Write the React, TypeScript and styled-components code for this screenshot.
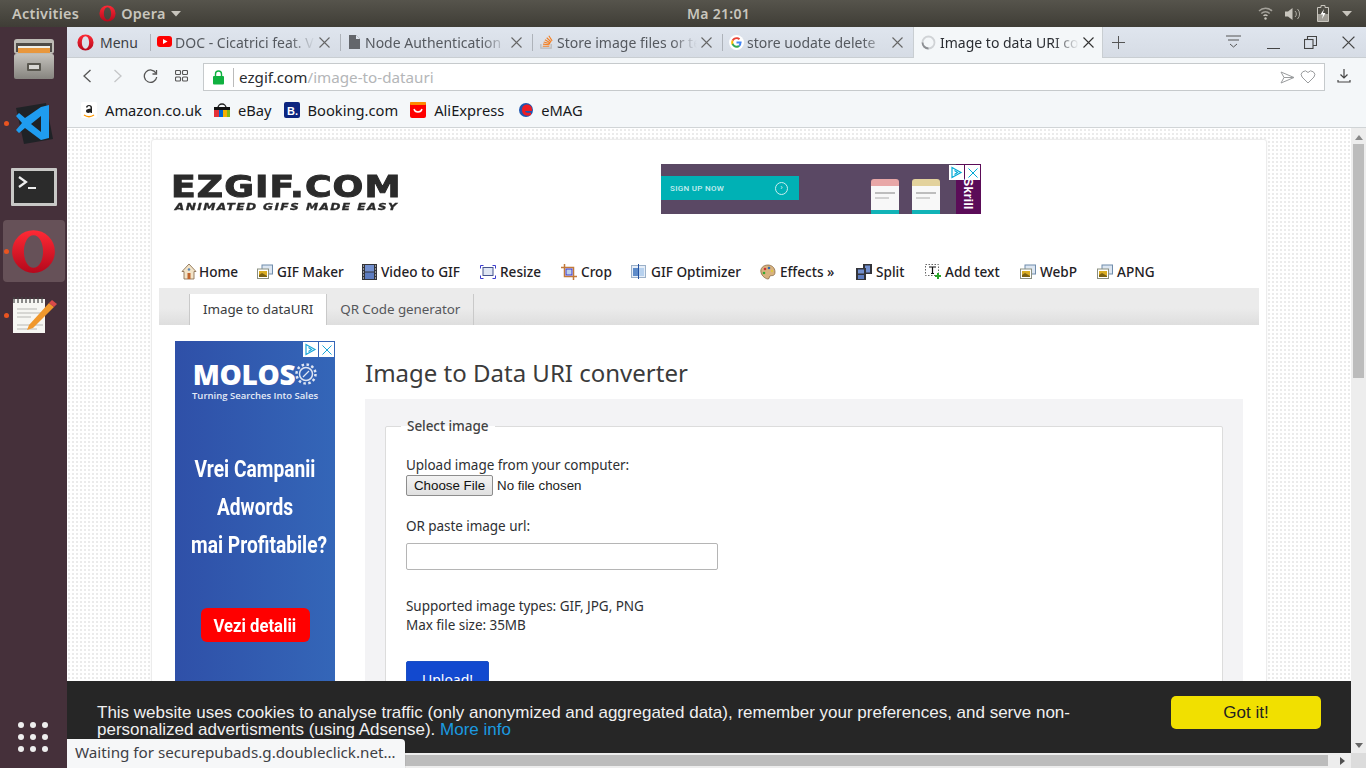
import React from "react";
import styled, { createGlobalStyle } from "styled-components";

const UI = `"Noto Sans", "Open Sans", sans-serif`;
const Global = createGlobalStyle`
  html, body { margin: 0; padding: 0; height: 768px; overflow: hidden; background: #fff; }
  #root { height: 768px; }
  * { box-sizing: border-box; }
`;

const Screen = styled.div`width:1366px;height:768px;display:flex;flex-direction:column;overflow:hidden;font-family:${UI};`;
const TopBar = styled.header`height:27px;flex:none;display:grid;grid-template-columns:675px auto 1fr;align-items:center;padding:0 12px;color:#c8c5bd;font-size:14px;font-weight:600;letter-spacing:.3px;background:linear-gradient(#56544c,#3f3d36);`;
const TopLeft = styled.div`display:flex;align-items:center;font-size:14.4px;`;
const AppMenu = styled.div`display:flex;align-items:center;gap:5px;margin-left:20px;`;
const TopRight = styled.div`display:flex;align-items:center;justify-content:flex-end;gap:12px;padding-right:2px;`;
const Body = styled.div`flex:1;display:flex;min-height:0;`;
const Dock = styled.nav`width:67px;flex:none;background:#45303a;display:flex;flex-direction:column;align-items:center;padding-top:1px;position:relative;`;
const DockItem = styled.div<{ $active?: boolean; $dot?: boolean }>`
  width:62px;height:62px;margin-bottom:2px;display:flex;align-items:center;justify-content:center;border-radius:4px;position:relative;
  background:${p => (p.$active ? "#665158" : "transparent")};
  ${p => p.$dot ? `&::before{content:"";position:absolute;left:1px;top:29px;width:5px;height:5px;border-radius:50%;background:#e95420;}` : ""}
`;
const DockGrid = styled.div`position:absolute;left:18px;bottom:16px;display:grid;grid-template-columns:repeat(3,6px);gap:6px;`;
const Dot = styled.span`width:6px;height:6px;border-radius:50%;background:#eee;`;
const Browser = styled.main`flex:1;min-width:0;display:flex;flex-direction:column;`;
const TabStrip = styled.div`height:31px;flex:none;display:flex;background:linear-gradient(#dfe5ee,#d6dce5);border-bottom:1px solid #c9ced2;position:relative;`;
const MenuBtn = styled.div`width:83px;flex:none;display:flex;align-items:center;gap:6px;padding-left:10px;font-size:14px;color:#3c3f44;`;
const Tab = styled.div<{ $active?: boolean; $w: number }>`
  width:${p => p.$w}px;flex:none;height:${p => (p.$active ? 31 : 30)}px;display:flex;align-items:center;gap:3px;padding:0 ${p => (p.$active ? 8 : 10)}px 0 7px;font-size:14px;position:relative;
  color:${p => (p.$active ? "#2b2e33" : "#55595f")};
  background:${p => (p.$active ? "#f4f7f9" : "transparent")};
  ${p => !p.$active ? `&::before{content:"";position:absolute;left:0;top:7px;height:17px;width:1px;background:#aeb3ba;}` : `border-left:1px solid #c9ced2;border-right:1px solid #c9ced2;`}
`;
const TabTitle = styled.span`flex:1;min-width:0;margin-right:1px;white-space:nowrap;overflow:hidden;-webkit-mask-image:linear-gradient(90deg,#000 82%,transparent 100%);mask-image:linear-gradient(90deg,#000 82%,transparent 100%);`;
const WinControls = styled.div`flex:none;display:flex;align-items:center;justify-content:flex-end;padding-left:12px;color:#4a4d52;`;
const Spacer = styled.div`flex:1;`;
const WinBtn = styled.div<{ $w: number }>`width:${p => p.$w}px;display:flex;justify-content:center;align-items:center;`;
const AddressRow = styled.div`height:36px;flex:none;background:#f4f7f9;display:flex;align-items:center;padding-left:9px;color:#55595f;`;
const NavBtn = styled.div<{ $w: number }>`width:${p => p.$w}px;flex:none;display:flex;align-items:center;justify-content:center;`;
const UrlBox = styled.div`width:1122px;height:28px;margin:2px 0 0 3px;flex:none;background:#fff;border:1px solid #c6cacc;display:flex;align-items:center;padding:0 8px 0 9px;font-size:15.2px;`;
const UrlDivider = styled.span`width:1px;height:19px;background:#bbb;margin:0 5px 0 9px;`;
const UrlHost = styled.span`color:#2a2c30;`;
const UrlPath = styled.span`color:#b4b6b8;`;
const Bookmarks = styled.div`height:34px;flex:none;background:#f4f7f9;border-bottom:1px solid #d0d4d6;display:flex;align-items:center;padding:0 0 2px 14px;gap:12px;font-size:14.7px;color:#17191c;`;
const Bookmark = styled.div<{ $ml?: number }>`display:flex;align-items:center;gap:8px;margin-left:${p => p.$ml ?? 0}px;`;
const Viewport = styled.div`flex:1;min-height:0;position:relative;display:grid;grid-template-columns:1fr 15px;grid-template-rows:1fr 15px;overflow:hidden;`;
const Page = styled.div`
  min-width:0;min-height:0;overflow:hidden;padding:11px 84px 0;
  background-color:#fff;
  background-image:radial-gradient(#ebebeb .9px,transparent 1px);
  background-size:4px 4px;
`;
const Card = styled.div`background:#fff;border:1px solid #ececec;border-radius:3px;box-shadow:0 0 3px rgba(0,0,0,.05);width:1116px;height:700px;padding:0 7px;`;
const Header = styled.div`height:111px;display:flex;`;
const Logo = styled.div`width:502px;flex:none;padding:33px 0 0 12px;color:#2b2b2b;font-family:"DejaVu Sans",sans-serif;font-weight:700;`;
const LogoMain = styled.div`font-size:31px;line-height:27px;letter-spacing:.9px;-webkit-text-stroke:1px #2b2b2b;white-space:nowrap;transform:scaleX(1.17);transform-origin:left center;`;
const LogoSub = styled.div`font-size:9.5px;line-height:11px;margin-top:1px;font-style:italic;letter-spacing:1.05px;white-space:nowrap;-webkit-text-stroke:.3px #2b2b2b;padding-left:3px;transform:scaleX(1.29);transform-origin:left center;`;
const LeaderAd = styled.div`margin-top:24px;width:320px;height:50px;background:#5a4864;position:relative;display:flex;align-items:center;overflow:hidden;`;
const SignUp = styled.div`width:138px;height:24px;background:#00b1b5;color:#c8eef0;font:500 8px Roboto,sans-serif;letter-spacing:.3px;padding:0 11px 0 9px;display:flex;align-items:center;justify-content:space-between;margin-top:-2px;`;
const Ring = styled.span`width:13px;height:13px;border:1px solid #c8eef0;border-radius:50%;display:flex;align-items:center;justify-content:center;font-size:8px;line-height:1;`;
const Phone = styled.div<{ $c: string; $x: number }>`
  position:absolute;left:${p => p.$x}px;bottom:0;width:28px;height:35px;border-radius:3px 3px 0 0;
  background:
    linear-gradient(#bdbdbd,#bdbdbd) 4px 13px/20px 2px no-repeat,
    linear-gradient(#d2d2d2,#d2d2d2) 4px 18px/14px 2px no-repeat,
    linear-gradient(${p => p.$c} 0 7px,#f8f8f8 7px 31px,#11b3b7 31px);
`;
const Skrill = styled.div`position:absolute;right:0;top:0;width:25px;height:50px;background:#5b0c58;color:#fff;display:flex;align-items:center;justify-content:center;`;
const SkrillText = styled.span`font:700 13px "Liberation Sans",sans-serif;transform:rotate(90deg);display:block;margin-top:9px;`;
const AdBadges = styled.div`position:absolute;top:1px;right:1px;display:flex;gap:1px;`;
const AdBadge = styled.span`width:15px;height:15px;background:#fff;display:flex;align-items:center;justify-content:center;`;
const Nav = styled.div`height:37px;display:flex;align-items:center;padding:4px 0 0 22px;font-size:13.6px;font-weight:500;color:#1f2125;`;
const NavLink = styled.div<{ $w: number }>`display:flex;align-items:center;gap:4px;width:${p => p.$w}px;flex:none;white-space:nowrap;`;
const SubNav = styled.div`height:37px;background:linear-gradient(#ebebeb,#ebebeb 55%,#dedede);display:flex;align-items:flex-end;padding-left:30px;`;
const SubTab = styled.div<{ $active?: boolean }>`height:31px;padding:0 13px 2px;display:flex;align-items:center;font-size:13.4px;letter-spacing:-.05px;color:${p => (p.$active ? "#3a3c40" : "#55575b")};background:${p => (p.$active ? "#fff" : "transparent")};border-right:1px solid #c9c9c9;${p => p.$active ? "border-left:1px solid #c9c9c9;" : ""}`;
const Columns = styled.div`display:flex;padding:16px 16px 0;gap:30px;`;
const SideAd = styled.div`width:160px;height:345px;flex:none;position:relative;background:linear-gradient(90deg,#2f50a8,#3466b8);color:#fff;font-family:Roboto,sans-serif;text-align:center;`;
const AdLogo = styled.div`font:800 28px/30px "Open Sans",sans-serif;padding-top:18px;letter-spacing:-.3px;display:flex;justify-content:center;align-items:center;`;
const AdTag = styled.div`font:600 9.5px/11px "Open Sans",sans-serif;margin-top:1px;color:#e4ebf7;white-space:nowrap;`;
const AdLine = styled.div<{ $mt?: number }>`font:700 24px/26px Roboto,sans-serif;transform:scaleX(.8);white-space:nowrap;margin-top:${p => p.$mt ?? 12}px;`;
const RedBtn = styled.div`width:109px;height:34px;margin:50px auto 0;background:#f00;border-radius:6px;font:700 18.5px/36px Roboto,sans-serif;`;
const RedText = styled.span`display:inline-block;transform:scaleX(.9);`;
const Main = styled.div`flex:1;min-width:0;`;
const Title = styled.h1`margin:17px 0 11px;font-size:24px;line-height:30px;font-weight:400;color:#3b3b3b;`;
const Panel = styled.div`background:#f3f3f5;padding:27px 20px 0;height:340px;`;
const Fieldset = styled.div`background:#fff;border:1px solid #dcdcdc;border-radius:2px;height:320px;padding:29px 20px 0;position:relative;font-size:13.5px;letter-spacing:-.05px;color:#2e3033;`;
const Legend = styled.div`position:absolute;left:15px;top:-10px;padding:0 6px;background:linear-gradient(#f3f3f5 50%,#fff 50%);line-height:18px;font-weight:500;color:#444;`;
const Label = styled.div<{ $mt?: number }>`line-height:19px;margin-top:${p => p.$mt ?? 0}px;`;
const FileRow = styled.div`display:flex;align-items:center;gap:4px;font:13.33px "Liberation Sans",Arial,sans-serif;letter-spacing:0;color:#222;`;
const FileBtn = styled.button`width:87px;height:21px;padding:0;background:linear-gradient(#f3f3f3,#e0e0e0);border:1px solid #8d8d8d;border-radius:2px;font:13.33px "Liberation Sans",Arial,sans-serif;color:#111;`;
const UrlInput = styled.input`display:block;width:312px;height:27px;border:1px solid #b5b5b5;border-radius:2px;background:#fff;margin-top:7px;`;
const Upload = styled.button`width:83px;height:36px;background:#1249cf;border:1px solid #1a4fc4;border-radius:2px;color:#fff;font:14px ${UI};margin-top:26px;padding:0;display:block;`;
const VBar = styled.div`background:#ededed;position:relative;display:flex;flex-direction:column;align-items:center;justify-content:space-between;padding:7px 0 5px;`;
const VThumb = styled.div`position:absolute;top:16px;left:2px;width:11px;height:234px;background:#bcbcbc;`;
const HBar = styled.div`background:#ededed;position:relative;display:flex;align-items:center;justify-content:flex-end;padding-right:6px;`;
const HThumb = styled.div`position:absolute;top:2px;left:0;width:1261px;height:11px;background:#bcbcbc;`;
const Corner = styled.div`background:#dcdcdc;`;
const Up = styled.i<{ $flip?: boolean }>`display:block;width:0;height:0;border-left:4px solid transparent;border-right:4px solid transparent;${p => p.$flip ? "border-top:5px solid #666;" : "border-bottom:5px solid #888;"}`;
const Right = styled.i`display:block;width:0;height:0;border-top:4px solid transparent;border-bottom:4px solid transparent;border-left:5px solid #505050;`;
const Cookie = styled.div`position:absolute;left:0;right:15px;bottom:15px;height:72px;background:#262626;color:#f0f0f0;display:flex;justify-content:space-between;padding:15px 30px 0;font:17px/17px Helvetica,"Liberation Sans",Arial,sans-serif;`;
const CookieText = styled.div`width:1004px;padding-top:8px;`;
const MoreInfo = styled.span`color:#1b9ae0;`;
const GotIt = styled.div`width:150px;height:33px;background:#f1e000;border-radius:5px;color:#222;text-align:center;line-height:33px;`;
const Status = styled.div`position:absolute;left:0;bottom:0;width:338px;height:29px;background:#f6f7f8;border-radius:0 4px 0 0;box-shadow:0 0 1px rgba(0,0,0,.4);font-size:15.2px;line-height:26px;padding-left:8px;color:#3e4045;white-space:nowrap;`;

const X = ({ s = 11, c = "#666" }: { s?: number; c?: string }) => (
  <svg width={s} height={s} viewBox="0 0 11 11" fill="none" stroke={c} strokeWidth="1.1" style={{ flex: "none" }}><path d="M.5.5l10 10M10.5.5l-10 10" /></svg>
);
const OperaO = ({ s = 17 }: { s?: number }) => (
  <svg width={s} height={s} viewBox="0 0 40 40" style={{ flex: "none" }}><defs><linearGradient id="op" x1="0" y1="0" x2="0" y2="1"><stop offset="0" stopColor="#ff2a35" /><stop offset="1" stopColor="#b5081c" /></linearGradient></defs><path fillRule="evenodd" fill="url(#op)" d="M20 1a19 19 0 1 0 0 38 19 19 0 0 0 0-38zm0 4.500c5 0 8.500 6.500 8.500 14.500s-3.500 14.500-8.500 14.500-8.500-6.500-8.500-14.500 3.500-14.500 8.500-14.500z" /></svg>
);
const Yt = () => (<svg width="15" height="16" viewBox="0 0 15 16" style={{ flex: "none" }}><rect x="0" y="2" width="15" height="11" rx="3" fill="#f00" /><path d="M6 5l4.500 2.500L6 10z" fill="#fff" /></svg>);
const Doc = () => (<svg width="15" height="16" viewBox="0 0 15 16" style={{ flex: "none" }}><path d="M2 1h7l4 4v10H2z" fill="#63666b" /><path d="M9 1v4h4" fill="#dfe5ee" /></svg>);
const So = () => (<svg width="15" height="16" viewBox="0 0 16 16" fill="none" style={{ flex: "none" }}><path d="M2 10v4.500h11V10" stroke="#b9b9b9" strokeWidth="1.300" /><path d="M4 12.500h7M4.300 10.300l6.900.6M5 8l6.700 1.800M6.300 5.700l6 3.300M8.200 3.500l4.800 4.500M10.500 1.300l3.500 5.500" stroke="#f48024" strokeWidth="1.200" /></svg>);
const G = () => (<svg width="15" height="15" viewBox="0 0 48 48" style={{ flex: "none" }}><circle cx="24" cy="24" r="24" fill="#fff" /><path fill="#ea4335" d="M24 13c3 0 5.400 1 7.300 2.800l4.400-4.400C32.700 8.600 28.800 7 24 7c-6.600 0-12.300 3.800-15.100 9.300l5.100 4C15.300 16.100 19.300 13 24 13z" /><path fill="#4285f4" d="M40.500 24.500c0-1.200-.1-2.300-.3-3.500H24v6.500h9.300c-.4 2.100-1.600 3.900-3.400 5.100l5 3.900c3-2.700 4.600-6.800 4.600-12z" /><path fill="#fbbc05" d="M14 27.700c-.4-1.200-.6-2.400-.6-3.700s.2-2.500.6-3.700l-5.100-4C7.700 18.600 7 21.200 7 24s.7 5.400 1.900 7.700z" /><path fill="#34a853" d="M24 41c4.600 0 8.400-1.500 11-4l-5-3.900c-1.400.9-3.300 1.500-6 1.500-4.700 0-8.700-3.100-10-7.900l-5.100 4C11.700 37.200 17.400 41 24 41z" /></svg>);
const Spinner = () => (<svg width="15" height="15" viewBox="0 0 15 15" fill="none" style={{ flex: "none", marginRight: 1 }}><circle cx="7.500" cy="7.500" r="6" stroke="#d0d3d6" strokeWidth="1.800" /><path d="M7.500 13.500a6 6 0 0 1-6-6" stroke="#8c8f93" strokeWidth="1.800" /></svg>);

const tabs = [
  { w: 190, t: "DOC - Cicatrici feat. Vlad", i: <Yt /> },
  { w: 192, t: "Node Authentication", i: <Doc /> },
  { w: 190, t: "Store image files or text", i: <So /> },
  { w: 191, t: "store uodate delete", i: <G /> },
];

const NavHouse = () => (<svg width="16" height="17" viewBox="0 0 16 17" style={{ marginRight: -2 }}><path d="M8 1L1 8.500h2V16h10V8.500h2z" fill="#f2e3c7" stroke="#8d7355" strokeWidth=".9" /><rect x="6.500" y="10" width="3" height="6" fill="#c0642c" /><circle cx="8" cy="6.500" r="1.300" fill="#5a86b8" /></svg>);
const NavPics = () => (<svg width="16" height="16" viewBox="0 0 16 16"><rect x="5" y="1" width="10.500" height="9" fill="#dce6f2" stroke="#6f8cab" /><rect x=".5" y="5" width="11" height="9.500" fill="#fff" stroke="#8a8f80" /><rect x="2" y="7" width="8" height="6" fill="#d8ab22" /><path d="M2 11l3-2 5 3v1H2z" fill="#7b6112" /></svg>);
const NavFilm = () => (<svg width="15" height="16" viewBox="0 0 15 16"><rect width="15" height="16" fill="#33343a" /><rect x="3" y="1" width="9" height="6.500" fill="#7390cf" /><rect x="3" y="8.500" width="9" height="6.500" fill="#5d7cc0" /><path d="M1 2h1M1 5h1M1 8h1M1 11h1M1 14h1M13 2h1M13 5h1M13 8h1M13 11h1M13 14h1" stroke="#fff" /></svg>);
const NavResize = () => (<svg width="16" height="14" viewBox="0 0 16 14" fill="none"><rect x="3" y="2.500" width="10" height="8" fill="#dfe6f3" stroke="#46548e" /><path d="M.5 3.500v-3h3M12.500.5h3v3M15.500 10.500v3h-3M3.500 13.500h-3v-3" stroke="#3c3ccf" /></svg>);
const NavCrop = () => (<svg width="16" height="16" viewBox="0 0 16 16" fill="none"><path d="M3.500 0v12.500H16" stroke="#c27a3a" strokeWidth="1.500" /><path d="M0 3.500h12.500V16" stroke="#c27a3a" strokeWidth="1.500" /><rect x="5" y="5" width="6" height="6" fill="#bcd0ea" stroke="#3a3ad0" /></svg>);
const NavOpt = () => (<svg width="15" height="15" viewBox="0 0 15 15" style={{ marginRight: 1 }}><rect x=".5" y="1.500" width="14" height="12" fill="#e6eef8" stroke="#9bb0c8" /><rect x="2" y="4" width="5" height="8" fill="#5d8bc9" /><rect x="8" y="4" width="5" height="8" fill="#b7d1ee" /><path d="M7.500 0v15" stroke="#2350a0" /></svg>);
const NavPalette = () => (<svg width="16" height="16" viewBox="0 0 16 16"><path d="M8 1C3 1 0 4.500 1 8.500S6 15 8 15c1.500 0 1-2 2-3s5 1 5-4-4-7-7-7z" fill="#d8b27e" stroke="#7c5c34" strokeWidth=".7" /><circle cx="5" cy="5" r="1.300" fill="#c33" /><circle cx="9" cy="4" r="1.300" fill="#36a" /><circle cx="4" cy="9" r="1.300" fill="#3a3" /><circle cx="12" cy="7" r="1.100" fill="#dc3" /></svg>);
const NavSplit = () => (<svg width="16" height="16" viewBox="0 0 16 16"><rect x="7" y="0" width="9" height="10" fill="#33343a" /><rect x="9" y="1.500" width="5" height="7" fill="#7390cf" /><rect x="0" y="4" width="10" height="12" fill="#33343a" /><rect x="2" y="5.500" width="6" height="4" fill="#7390cf" /><rect x="2" y="11" width="6" height="4" fill="#5d7cc0" /></svg>);
const NavTextIcon = () => (<svg width="16" height="17" viewBox="0 0 16 17" fill="none"><rect x=".5" y="1.500" width="13" height="11" stroke="#666" strokeDasharray="1.500 1.500" /><path d="M4 4h7M7.500 4v6.500M6 10.500h3" stroke="#111" strokeWidth="1.200" /><path d="M13 10v6M10 13h6" stroke="#2aa52a" strokeWidth="2" /></svg>);

const navItems: [React.ReactNode, string, number][] = [
  [<NavHouse />, "Home", 76], [<NavPics />, "GIF Maker", 105], [<NavFilm />, "Video to GIF", 118], [<NavResize />, "Resize", 81],
  [<NavCrop />, "Crop", 70], [<NavOpt />, "GIF Optimizer", 129], [<NavPalette />, "Effects »", 96], [<NavSplit />, "Split", 69],
  [<NavTextIcon />, "Add text", 95], [<NavPics />, "WebP", 77], [<NavPics />, "APNG", 58],
];

const AdChoice = ({ c = "#00a9d6" }: { c?: string }) => (
  <AdBadges>
    <AdBadge><svg width="13" height="13" viewBox="0 0 13 13" fill="none" stroke={c} strokeWidth="1.200"><path d="M2 1.500l9 5-9 5z" /><path d="M4.500 4.500l3 2-3 2" /></svg></AdBadge>
    <AdBadge><X s={10} c={c} /></AdBadge>
  </AdBadges>
);

export default function App() {
  return (
    <Screen>
      <Global />
      <TopBar>
        <TopLeft>
          Activities
          <AppMenu>
            <OperaO />
            Opera
            <svg width="10" height="6" viewBox="0 0 10 6"><path d="M0 0h10L5 5.500z" fill="#c8c5bd" /></svg>
          </AppMenu>
        </TopLeft>
        <div>Ma 21:01</div>
        <TopRight>
          <svg width="15" height="13" viewBox="0 0 15 13" fill="none" stroke="#c8c5bd" strokeWidth="1.400"><path d="M1 4a9 9 0 0 1 13 0M3.300 6.500a6 6 0 0 1 8.400 0" opacity=".7" /><path d="M5.500 8.800a3 3 0 0 1 4 0" /><circle cx="7.500" cy="11.500" r="1.200" fill="#c8c5bd" stroke="none" /></svg>
          <svg width="16" height="14" viewBox="0 0 16 14" fill="#c8c5bd"><path d="M0 4.500h3L7.500 1v12L3 9.500H0z" /><path d="M10 4a4 4 0 0 1 0 6M12.500 2a7 7 0 0 1 0 10" stroke="#c8c5bd" fill="none" opacity=".8" /></svg>
          <svg width="12" height="17" viewBox="0 0 12 17" fill="none" style={{ margin: "0 1px 0 4px" }}><path d="M4 .5h4v2h3.500v14H.5v-14H4z" stroke="#c8c5bd" /><path d="M1 9h10v7H1z" fill="#c8c5bd" opacity=".7" /><path d="M7 4L3.500 9.500H6L5 14l3.500-6H6z" fill="#fff" /></svg>
          <svg width="10" height="6" viewBox="0 0 10 6"><path d="M0 0h10L5 5.500z" fill="#c8c5bd" /></svg>
        </TopRight>
      </TopBar>
      <Body>
        <Dock>
          <DockItem>
            <svg width="44" height="44" viewBox="0 0 44 44"><defs><linearGradient id="cab" x1="0" y1="0" x2="0" y2="1"><stop offset="0" stopColor="#c4c2bc" /><stop offset="1" stopColor="#86847f" /></linearGradient></defs><rect x="2" y="2" width="40" height="15" rx="3" fill="#bdbbb5" /><rect x="4" y="6" width="36" height="9" fill="#4f4c48" /><rect x="6" y="9" width="32" height="2" fill="#f0f0ea" /><rect x="6" y="11" width="32" height="5" fill="#e8973c" /><rect x="2" y="17" width="40" height="25" rx="2" fill="url(#cab)" /><rect x="15" y="26" width="14" height="8" rx="1" fill="#59574f" /><rect x="17" y="28" width="10" height="4" fill="#d9d8d4" /></svg>
          </DockItem>
          <DockItem $dot>
            <svg width="44" height="44" viewBox="0 0 44 44"><path d="M4 7l30-5 7 36-29 5z" fill="#1f2226" /><path fillRule="evenodd" fill="#1f9cf0" d="M29 6l8-2v33l-8 2-16-12-6 5-3-3 6-7-6-7 3-3 6 5zm0 9l-10 8 10 8z" /></svg>
          </DockItem>
          <DockItem>
            <svg width="46" height="38" viewBox="0 0 46 38"><rect width="46" height="38" rx="1" fill="#c8c8c6" /><rect x="3" y="3" width="40" height="32" fill="#2b2b2b" /><path d="M8 9l7 5-7 5" stroke="#eee" strokeWidth="2.200" fill="none" /><path d="M17 20h8" stroke="#eee" strokeWidth="2" /></svg>
          </DockItem>
          <DockItem $active $dot>
            <OperaO s={45} />
          </DockItem>
          <DockItem $dot>
            <svg width="46" height="40" viewBox="0 0 46 40"><rect x="2" y="4" width="32" height="34" fill="#f6f6f2" /><path d="M3 2v6M7 2v6M11 2v6M15 2v6M19 2v6M23 2v6M27 2v6M31 2v6" stroke="#444" strokeWidth="1.200" /><path d="M6 14h20M6 18h24M6 22h14M6 30h26M6 34h20" stroke="#b8b8b4" strokeWidth="1.200" /><path d="M18 30L38 8l5 4-21 21-6 2z" fill="#f0982c" /><path d="M38 8l3-3 5 4-3 3z" fill="#d94a4a" /></svg>
          </DockItem>
          <DockGrid>{Array.from({ length: 9 }, (_, i) => <Dot key={i} />)}</DockGrid>
        </Dock>
        <Browser>
          <TabStrip>
            <MenuBtn><OperaO />Menu</MenuBtn>
            {tabs.map(t => (
              <Tab key={t.t} $w={t.w}>{t.i}<TabTitle>{t.t}</TabTitle><X /></Tab>
            ))}
            <Tab $active $w={190}><Spinner /><TabTitle>Image to data URI converter</TabTitle><X s={11} c="#333" /></Tab>
            <WinBtn $w={30}><svg width="13" height="13" viewBox="0 0 13 13" stroke="#555" fill="none"><path d="M6.500 0v13M0 6.500h13" /></svg></WinBtn>
            <Spacer />
            <WinControls>
              <WinBtn $w={46}><svg width="15" height="14" viewBox="0 0 15 14" fill="none" stroke="#555"><path d="M0 1h15M2 5h11" /><path d="M4 9l3.500 3L11 9" /></svg></WinBtn>
              <WinBtn $w={34}><svg width="13" height="13" viewBox="0 0 13 13" fill="none" stroke="#444"><path d="M0 12.500h13" /></svg></WinBtn>
              <WinBtn $w={40}><svg width="13" height="13" viewBox="0 0 13 13" fill="none" stroke="#444" strokeWidth="1.100"><rect x=".5" y="3.500" width="8.500" height="9" /><path d="M3.500 3.500v-3h9v9H9" /></svg></WinBtn>
              <WinBtn $w={36}><X s={13} c="#444" /></WinBtn>
            </WinControls>
          </TabStrip>
          <AddressRow>
            <NavBtn $w={22}><svg width="10" height="14" viewBox="0 0 10 14" fill="none" stroke="#555" strokeWidth="1.300"><path d="M8.500 1L2 7l6.500 6" /></svg></NavBtn>
            <NavBtn $w={40}><svg width="10" height="14" viewBox="0 0 10 14" fill="none" stroke="#c4c6c8" strokeWidth="1.300"><path d="M1.500 1L8 7l-6.500 6" /></svg></NavBtn>
            <NavBtn $w={24}><svg width="15" height="15" viewBox="0 0 15 15" fill="none" stroke="#555" strokeWidth="1.300"><path d="M13 4.200A6.200 6.200 0 1 0 13.700 8" /><path d="M13.500 1v4h-4" /></svg></NavBtn>
            <NavBtn $w={38}><svg width="13" height="12" viewBox="0 0 13 12" fill="none" stroke="#555" strokeWidth="1.100"><rect x=".5" y=".5" width="5" height="4" rx="1" /><rect x="7.500" y=".5" width="5" height="4" rx="1" /><rect x=".5" y="7" width="5" height="4" rx="1" /><rect x="7.500" y="7" width="5" height="4" rx="1" /></svg></NavBtn>
            <UrlBox>
              <svg width="11" height="15" viewBox="0 0 11 15" style={{ flex: "none" }}><path d="M2.500 6V4a3 3 0 0 1 6 0v2" fill="none" stroke="#10b140" strokeWidth="1.400" /><rect y="6" width="11" height="8.500" rx="1" fill="#10b140" /></svg>
              <UrlDivider />
              <UrlHost>ezgif.com</UrlHost><UrlPath>/image-to-datauri</UrlPath>
              <Spacer />
              <svg width="15" height="13" viewBox="0 0 15 13" fill="none" stroke="#9a9c9e"><path d="M1 1l13 5.500L1 12l3-5.500z" /><path d="M4 6.500h10" /></svg>
              <svg width="16" height="14" viewBox="0 0 16 14" fill="none" stroke="#9a9c9e" style={{ marginLeft: 5 }}><path d="M8 13L2 7a3.600 3.600 0 0 1 6-4.500A3.600 3.600 0 0 1 14 7z" /></svg>
            </UrlBox>
            <NavBtn $w={38}><svg width="14" height="14" viewBox="0 0 14 14" fill="none" stroke="#444" strokeWidth="1.200"><path d="M7 0v9M3.500 5.500L7 9l3.500-3.500M1 11v2h12v-2" /></svg></NavBtn>
          </AddressRow>
          <Bookmarks>
            <Bookmark>
              <svg width="16" height="16" viewBox="0 0 16 16"><rect width="16" height="16" rx="2" fill="#fff" /><path d="M3 13c3 2 7 2 10 0" stroke="#f90" strokeWidth="1.400" fill="none" /><path d="M5 5.500a3 2.500 0 0 1 6 0V11H9.500v-1c-1.800 1.600-4.500 1-4.500-1 0-2 2.800-2.300 4.500-2.300V5.500a1.500 1.500 0 0 0-3 0z" fill="#222" /></svg>
              Amazon.co.uk
            </Bookmark>
            <Bookmark>
              <svg width="16" height="16" viewBox="0 0 16 16"><path d="M4 6a4 4 0 0 1 8 0" stroke="#222" strokeWidth="1.400" fill="none" /><rect y="5" width="16" height="3" fill="#111" /><rect y="8" width="5" height="7" fill="#e53238" /><rect x="5" y="8" width="4" height="7" fill="#0064d2" /><rect x="9" y="8" width="4" height="7" fill="#f5af02" /><rect x="13" y="8" width="3" height="7" fill="#86b817" /></svg>
              eBay
            </Bookmark>
            <Bookmark>
              <svg width="16" height="16" viewBox="0 0 16 16"><rect width="16" height="16" rx="2" fill="#0c2580" /><text x="3" y="12.500" fontSize="11" fontWeight="700" fill="#fff" fontFamily="Liberation Sans">B.</text></svg>
              Booking.com
            </Bookmark>
            <Bookmark>
              <svg width="16" height="16" viewBox="0 0 16 16"><rect width="16" height="16" rx="2" fill="#f00" /><rect width="16" height="3" rx="1" fill="#ff8a00" /><path d="M4 7c1 4 7 4 8 0" stroke="#fff" strokeWidth="1.400" fill="none" /></svg>
              AliExpress
            </Bookmark>
            <Bookmark $ml={3}>
              <svg width="14" height="14" viewBox="0 0 14 14"><circle cx="7" cy="7" r="7" fill="#1f56b0" /><path d="M3 7a5 5 0 0 1 10-1v2H6c.5 2 3 2.500 6 1.500V12c-4 1.500-9 .5-9-5z" fill="#ed1c24" /></svg>
              eMAG
            </Bookmark>
          </Bookmarks>
          <Viewport>
            <Page>
              <Card>
                <Header>
                  <Logo>
                    <LogoMain>EZGIF.COM</LogoMain>
                    <LogoSub>ANIMATED GIFS MADE EASY</LogoSub>
                  </Logo>
                  <LeaderAd>
                    <SignUp>SIGN UP NOW<Ring>›</Ring></SignUp>
                    <Phone $c="#e8a7a7" $x={210} />
                    <Phone $c="#e3d29d" $x={251} />
                    <Skrill><SkrillText>Skrill</SkrillText></Skrill>
                    <AdChoice />
                  </LeaderAd>
                </Header>
                <Nav>
                  {navItems.map(([ic, label, w]) => (
                    <NavLink key={label} $w={w}>{ic}{label}</NavLink>
                  ))}
                </Nav>
                <SubNav>
                  <SubTab $active>Image to dataURI</SubTab>
                  <SubTab>QR Code generator</SubTab>
                </SubNav>
                <Columns>
                  <SideAd>
                    <AdChoice c="#1aa6d8" />
                    <AdLogo>
                      MOLOS
                      <svg width="22" height="22" viewBox="0 0 22 22" fill="none" stroke="#dfe6f3"><circle cx="11" cy="11" r="6.500" strokeWidth="1.500" /><circle cx="11" cy="11" r="9.500" strokeWidth="2.500" strokeDasharray="2.500 2.500" /><path d="M8 14l6-6" strokeWidth="1.300" /></svg>
                    </AdLogo>
                    <AdTag>Turning Searches Into Sales</AdTag>
                    <AdLine $mt={55}>Vrei Campanii</AdLine>
                    <AdLine>Adwords</AdLine>
                    <AdLine>mai Profitabile?</AdLine>
                    <RedBtn><RedText>Vezi detalii</RedText></RedBtn>
                  </SideAd>
                  <Main>
                    <Title>Image to Data URI converter</Title>
                    <Panel>
                      <Fieldset>
                        <Legend>Select image</Legend>
                        <Label>Upload image from your computer:</Label>
                        <FileRow><FileBtn>Choose File</FileBtn>No file chosen</FileRow>
                        <Label $mt={21}>OR paste image url:</Label>
                        <UrlInput />
                        <Label $mt={27}>Supported image types: GIF, JPG, PNG</Label>
                        <Label>Max file size: 35MB</Label>
                        <Upload>Upload!</Upload>
                      </Fieldset>
                    </Panel>
                  </Main>
                </Columns>
              </Card>
            </Page>
            <VBar>
              <Up />
              <VThumb />
              <Up $flip />
            </VBar>
            <HBar><HThumb /><Right /></HBar>
            <Corner />
            <Cookie>
              <CookieText>
                This website uses cookies to analyse traffic (only anonymized and aggregated data), remember your preferences, and serve non-personalized advertisments (using Adsense). <MoreInfo>More info</MoreInfo>
              </CookieText>
              <GotIt>Got it!</GotIt>
            </Cookie>
            <Status>Waiting for securepubads.g.doubleclick.net…</Status>
          </Viewport>
        </Browser>
      </Body>
    </Screen>
  );
}
